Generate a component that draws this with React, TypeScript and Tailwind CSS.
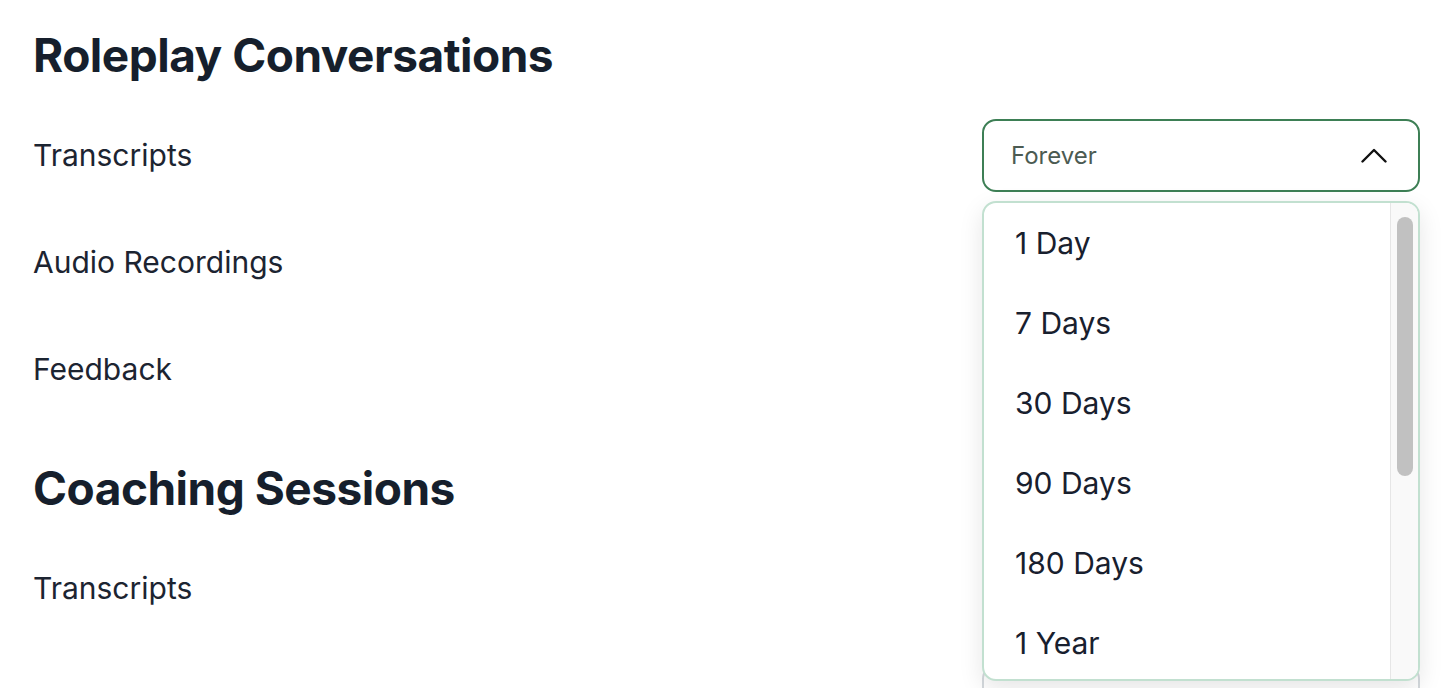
import React from "react";

const options = ["1 Day", "7 Days", "30 Days", "90 Days", "180 Days", "1 Year", "2 Years", "Forever"];

const Chevron = ({ up }: { up: boolean }) => (
  <svg width="26" height="15" viewBox="0 0 26 15" fill="none">
    <polyline
      points={up ? "1.5,13.5 13,2 24.5,13.5" : "1.5,1.5 13,13 24.5,1.5"}
      stroke="#111"
      strokeWidth="2.4"
      strokeLinecap="round"
      strokeLinejoin="round"
    />
  </svg>
);

const SelectBox = ({ open = false }: { open?: boolean }) => (
  <div className="relative w-[438px]">
    <div
      className={`h-[73px] rounded-[14px] border-2 flex items-center justify-between pl-[27px] pr-[31px] bg-white ${
        open ? "border-[#3d7f55]" : "border-[#d4d9dd]"
      }`}
    >
      <span className="text-[24px] text-[#4c5b52]">Forever</span>
      <Chevron up={open} />
    </div>
    {open && (
      <div className="absolute z-10 left-0 right-0 top-[82px] h-[480px] rounded-[14px] border-2 border-[#c2e0d0] bg-white shadow-[0_8px_24px_rgba(0,0,0,0.10)] overflow-hidden flex">
        <ul className="flex-1">
          {options.map((o) => (
            <li key={o} className="h-[80px] flex items-center pl-[31px] text-[30px] text-[#18202e]">
              {o}
            </li>
          ))}
        </ul>
        {/* scrollbar */}
        <div className="w-[28px] bg-[#f9f9f9] border-l border-[#e6e6e6] pt-[14px]">
          <div className="mx-auto w-[16px] h-[259px] rounded-full bg-[#c1c1c1]" />
        </div>
      </div>
    )}
  </div>
);

const Row = ({ label, open = false, pushed = false }: { label: string; open?: boolean; pushed?: boolean }) => (
  <div className={`h-[107px] flex items-center justify-between ${pushed ? "mt-[6px]" : ""} ${open ? "relative z-10" : ""}`}>
    <span className="text-[30px] text-[#1c2431]">{label}</span>
    <SelectBox open={open} />
  </div>
);

const Section = ({ title, rows, openFirst = false }: { title: string; rows: string[]; openFirst?: boolean }) => (
  <section>
    <h2 className="h-[72px] flex items-center text-[46px] font-bold tracking-[-0.5px] text-[#161f2c]">{title}</h2>
    <div className="mt-[11px] flex flex-col">
      {rows.map((r, i) => (
        <Row key={r + i} label={r} open={openFirst && i === 0} pushed={!openFirst && i === 1} />
      ))}
    </div>
  </section>
);

export default function App() {
  return (
    <div
      className="bg-white pl-[33px] pr-[26px] pt-[19px] flex flex-col gap-[29px] overflow-hidden h-[688px]"
      style={{ fontFamily: "Inter, 'Noto Sans', sans-serif" }}
    >
      <Section title="Roleplay Conversations" rows={["Transcripts", "Audio Recordings", "Feedback"]} openFirst />
      <Section title="Coaching Sessions" rows={["Transcripts", "Audio Recordings", "Feedback"]} />
    </div>
  );
}
